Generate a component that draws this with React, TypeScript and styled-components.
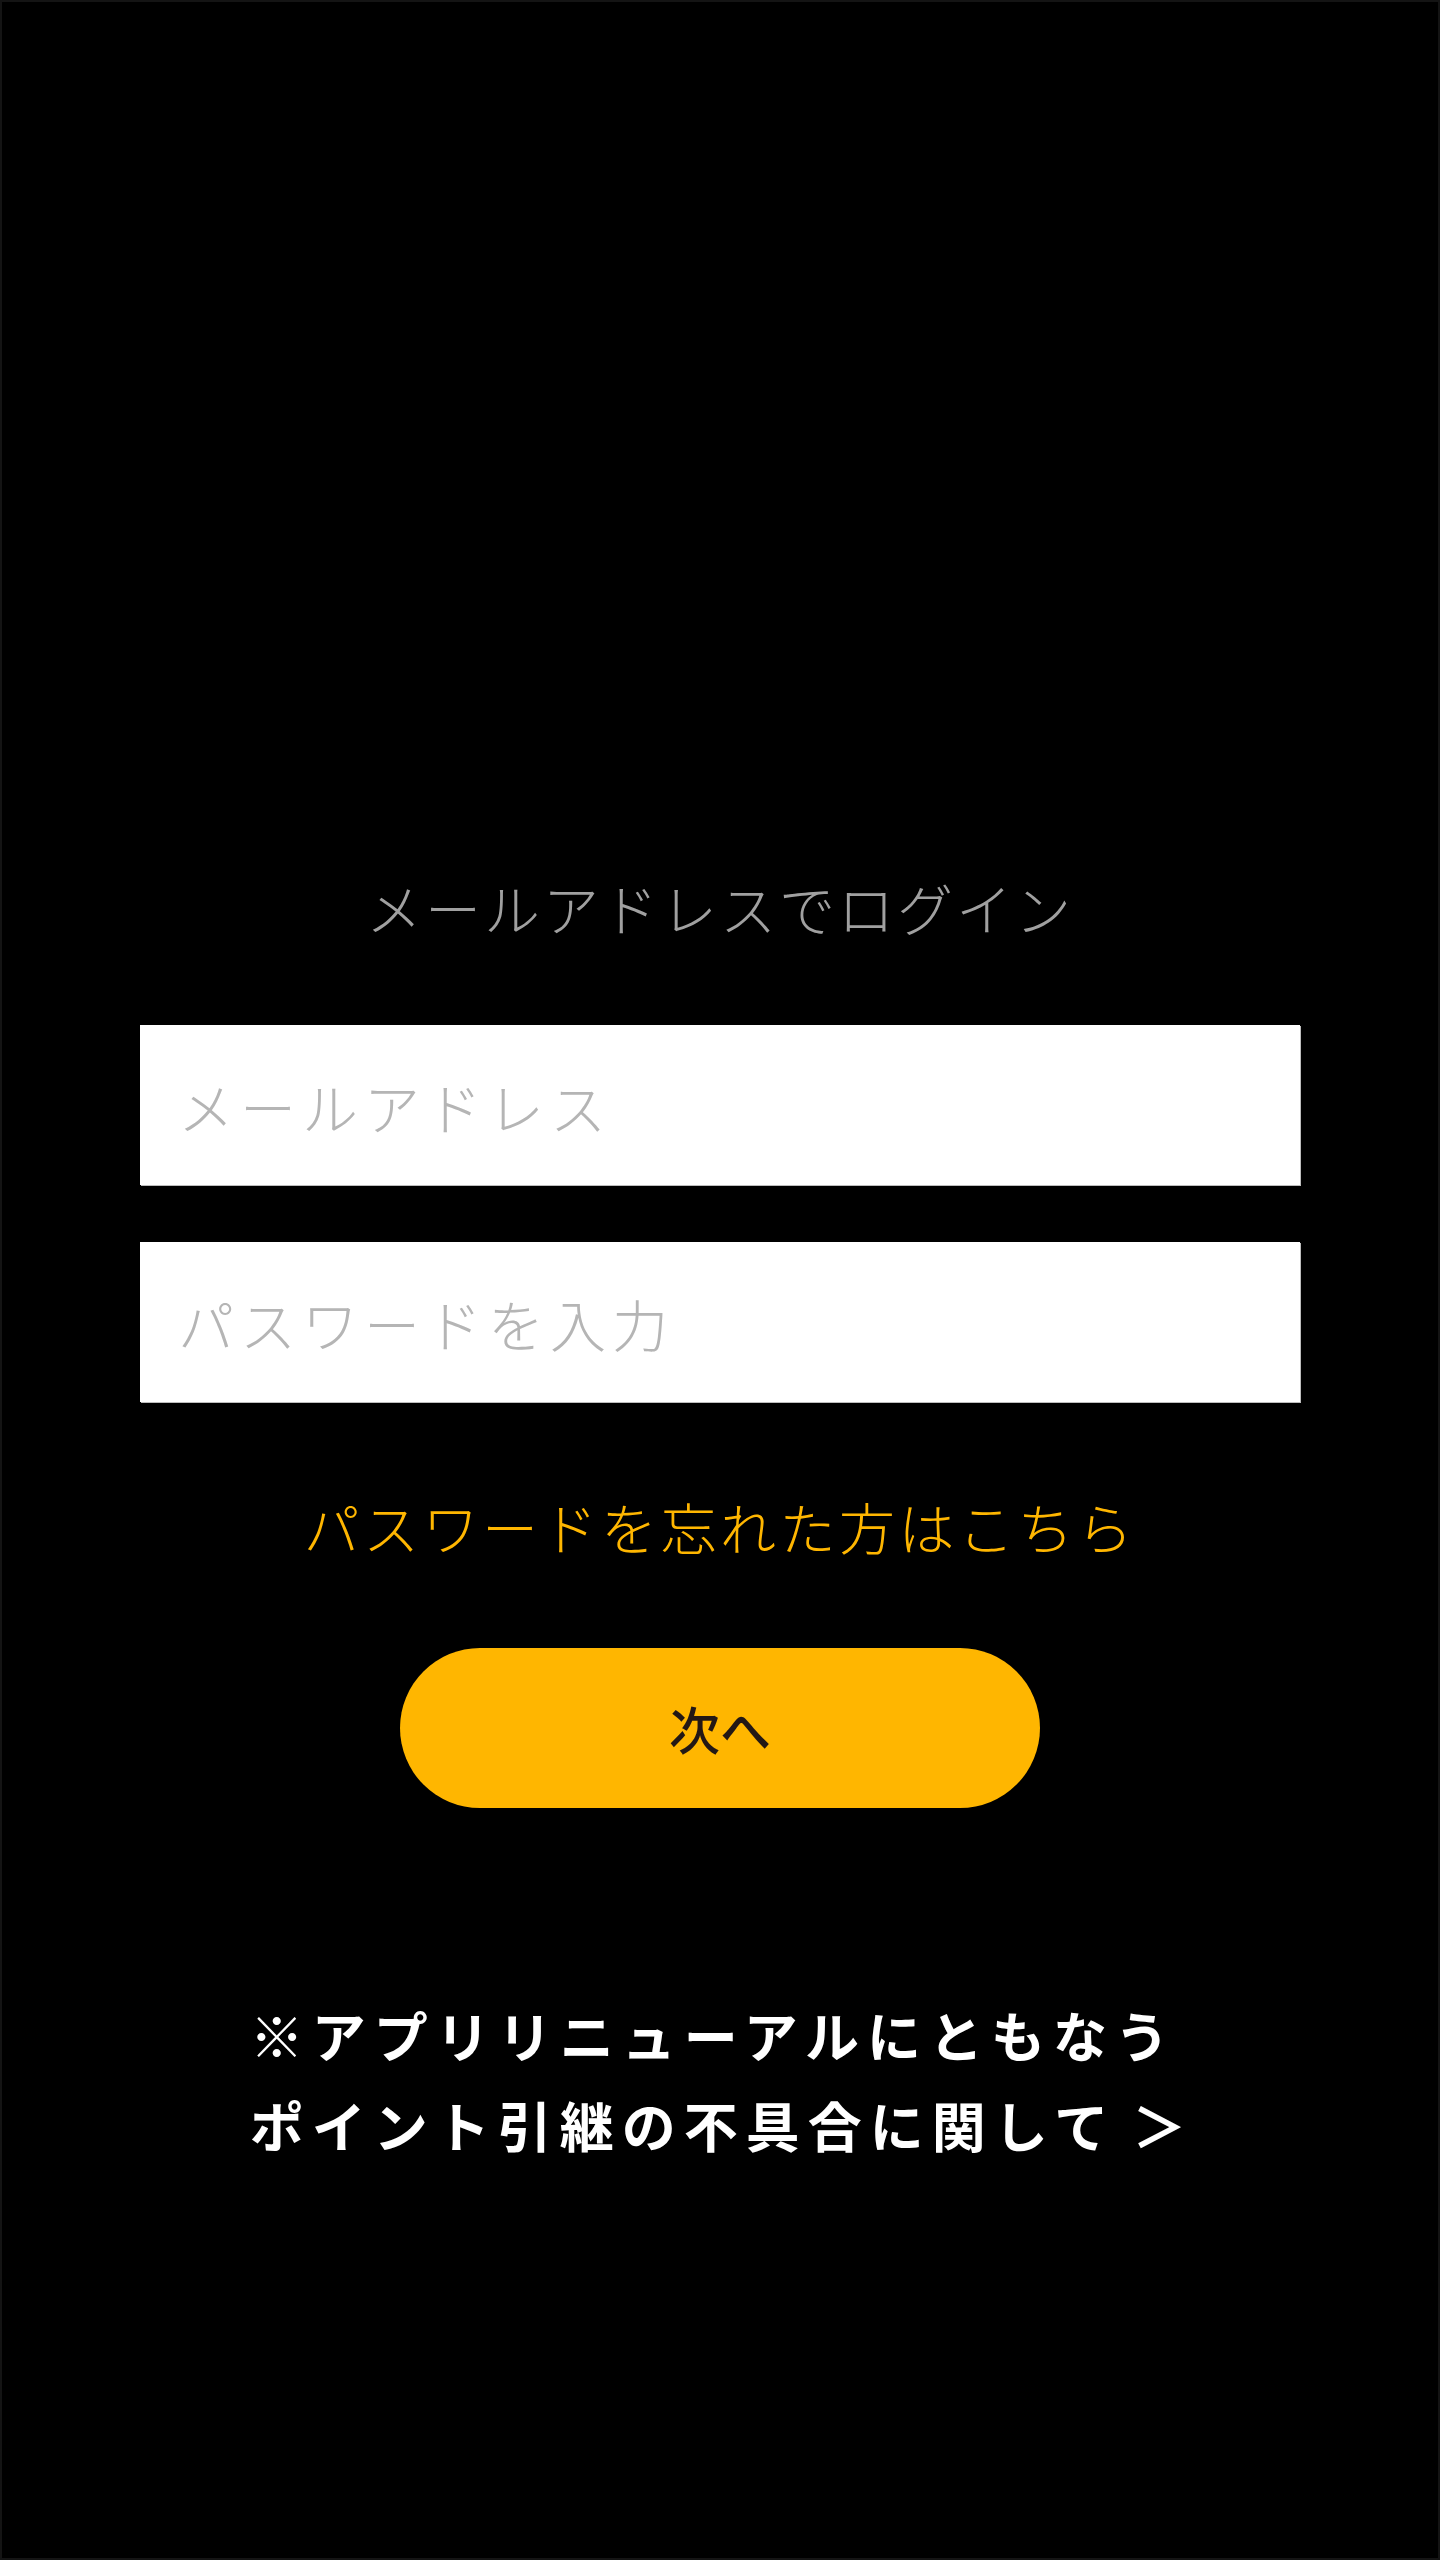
import React from "react";
import styled, { createGlobalStyle } from "styled-components";

const GlobalStyle = createGlobalStyle`
  html, body {
    margin: 0;
    padding: 0;
    background: #000;
  }
  * { box-sizing: border-box; }
`;

const FONT = `"Noto Sans CJK JP", "Noto Sans", sans-serif`;

const Page = styled.main`
  min-height: 2560px;
  background: #000;
  border: 2px solid #141414;
  display: flex;
  flex-direction: column;
  align-items: center;
  padding-top: 865px;
  font-family: ${FONT};
`;

const Title = styled.h1`
  margin: 0;
  height: 80px;
  line-height: 80px;
  font-size: 56px;
  font-weight: 300;
  letter-spacing: 3px;
  color: #a0a0a0;
`;

const Form = styled.form`
  width: 1160px;
  margin-top: 78px;
  display: flex;
  flex-direction: column;
  align-items: center;
  gap: 57px;
`;

const Field = styled.input`
  width: 100%;
  height: 160px;
  border: none;
  outline: none;
  background: #fff;
  box-shadow: 1px 1px 0 #bdbdbd;
  padding: 0 0 0 38px;
  font-family: ${FONT};
  font-size: 56px;
  font-weight: 300;
  letter-spacing: 6px;
  color: #333;
  &::placeholder {
    color: #b5b5b5;
    opacity: 1;
  }
`;

const ForgotLink = styled.a`
  display: block;
  margin-top: 84px;
  height: 80px;
  line-height: 80px;
  font-size: 56px;
  font-weight: 300;
  letter-spacing: 3.5px;
  color: #ffb600;
  text-decoration: none;
`;

const NextButton = styled.button`
  margin-top: 82px;
  width: 640px;
  height: 160px;
  border: none;
  border-radius: 80px;
  background: #ffb600;
  color: #231815;
  font-family: ${FONT};
  font-size: 51px;
  font-weight: 500;
  letter-spacing: 0;
  cursor: pointer;
`;

const Notice = styled.a`
  display: inline-block;
  margin-top: 182px;
  margin-left: -4px;
  text-align: left;
  font-size: 54px;
  font-weight: 700;
  line-height: 90px;
  letter-spacing: 8px;
  color: #fff;
  text-decoration: none;
`;

const Chevron = styled.span`
  display: inline-block;
  margin-left: 16px;
  letter-spacing: 0;
`;

export default function App() {
  return (
    <>
      <GlobalStyle />
      <Page>
        <Title>メールアドレスでログイン</Title>
        <Form onSubmit={(e) => e.preventDefault()}>
          <Field type="email" placeholder="メールアドレス" />
          <Field type="password" placeholder="パスワードを入力" />
        </Form>
        <ForgotLink href="#">パスワードを忘れた方はこちら</ForgotLink>
        <NextButton type="button">次へ</NextButton>
        <Notice href="#">
          ※アプリリニューアルにともなう
          <br />
          ポイント引継の不具合に関して<Chevron>＞</Chevron>
        </Notice>
      </Page>
    </>
  );
}
